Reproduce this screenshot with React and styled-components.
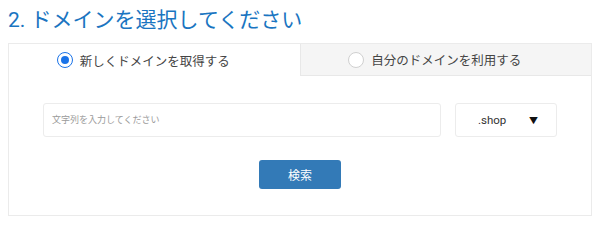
import React from 'react';
import { styled, createGlobalStyle } from 'styled-components';

const GlobalStyle = createGlobalStyle`
  body {
    margin: 8px;
    background: #fff;
    font-family: Roboto, "Noto Sans CJK JP", sans-serif;
    color: #333;
  }
`;

const App = () => {
  return (
    <>
      <GlobalStyle />
      <Heading>2. ドメインを選択してください</Heading>
      <Panel>
        <Tabs>
          <Tab $active>
            <Radio $checked />
            <span>新しくドメインを取得する</span>
          </Tab>
          <Tab>
            <Radio />
            <span>自分のドメインを利用する</span>
          </Tab>
        </Tabs>

        <SearchArea>
          <Row>
            <Input placeholder="文字列を入力してください" />
            <Select>
              <span>.shop</span>
              <Arrow>▼</Arrow>
            </Select>
          </Row>
          <Button>検索</Button>
        </SearchArea>
      </Panel>
    </>
  );
};

export default App;

const Heading = styled.h2`
  margin: 0 0 8px;
  height: 27px;
  font-size: 21px;
  font-weight: 400;
  line-height: 25px;
  color: #1a75c1;
`;

const Panel = styled.div`
  width: 584px;
  height: 173px;
  box-sizing: border-box;
  border: 1px solid #ebebeb;
`;

const Tabs = styled.div`
  display: flex;
  height: 32px;
`;

const Tab = styled.div`
  flex: 1;
  display: flex;
  align-items: center;
  justify-content: center;
  gap: 7px;
  padding-right: 22px;
  font-size: 12.5px;
  color: #444;
  background: ${({ $active }) => ($active ? '#fff' : '#f5f5f5')};
  border-left: ${({ $active }) => ($active ? 'none' : '1px solid #e8e8e8')};
  border-bottom: ${({ $active }) => ($active ? 'none' : '1px solid #e8e8e8')};
`;

const Radio = styled.span`
  position: relative;
  width: 14px;
  height: 14px;
  border-radius: 50%;
  border: 1px solid ${({ $checked }) => ($checked ? '#1a73e8' : '#d0d0d0')};
  background: #fff;

  &::after {
    content: '';
    display: ${({ $checked }) => ($checked ? 'block' : 'none')};
    position: absolute;
    left: 3px;
    top: 3px;
    width: 8px;
    height: 8px;
    border-radius: 50%;
    background: #1a73e8;
  }
`;

const SearchArea = styled.div`
  display: flex;
  flex-direction: column;
  align-items: center;
  padding: 27px 34px 0 34px;
`;

const Row = styled.div`
  display: flex;
  gap: 14px;
  width: 100%;
`;

const Input = styled.input`
  flex: 1;
  height: 34px;
  box-sizing: border-box;
  border: 1px solid #ececec;
  border-radius: 3px;
  padding: 0 8px;
  font-family: Roboto, "Noto Sans CJK JP", sans-serif;
  font-size: 9px;
  outline: none;

  &::placeholder {
    color: #9a9a9a;
  }
`;

const Select = styled.div`
  display: flex;
  align-items: center;
  justify-content: space-between;
  width: 102px;
  height: 34px;
  box-sizing: border-box;
  border: 1px solid #ececec;
  border-radius: 3px;
  padding: 0 18px 0 22px;
  font-size: 11.5px;
  color: #333;
`;

const Arrow = styled.span`
  font-size: 9px;
  color: #111;
`;

const Button = styled.button`
  margin-top: 23px;
  width: 82px;
  height: 29px;
  border: none;
  border-radius: 3px;
  background: #337ab7;
  color: #fff;
  font-family: Roboto, "Noto Sans CJK JP", sans-serif;
  font-size: 12px;
`;
